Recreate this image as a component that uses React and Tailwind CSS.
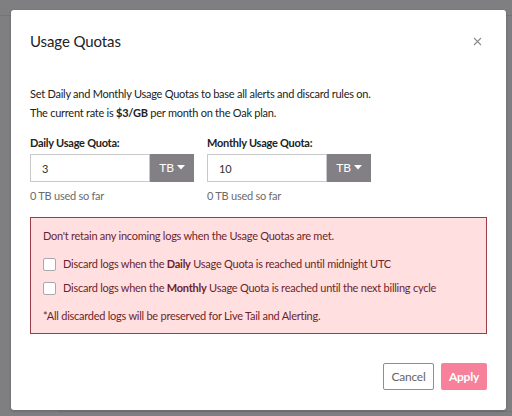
import React, { useState } from 'react';

function UnitButton() {
  return (
    <button className="flex w-[44px] items-center justify-center gap-[3px] bg-[#828085] text-[12px] text-white">
      TB
      <svg width="8" height="5" viewBox="0 0 8 5" className="mt-[-1px]">
        <path d="M0 0h8L4 4.5z" fill="#fff" />
      </svg>
    </button>
  );
}

function QuotaField({ label, value }) {
  const [v, setV] = useState(value);
  return (
    <div className="w-[164px]">
      <div className="mb-[3px] font-bold leading-[16px] text-[#222]">{label}</div>
      <div className="flex h-[28px]">
        <input
          value={v}
          onChange={(e) => setV(e.target.value)}
          className="h-full w-[120px] border border-[#c9c9cc] px-[11px] text-[11px] text-[#333] outline-none"
        />
        <UnitButton />
      </div>
      <div className="mt-[6px] leading-[16px] text-[#6b6b6b]">0 TB used so far</div>
    </div>
  );
}

function Check({ children }) {
  const [on, setOn] = useState(false);
  return (
    <label className="flex items-center gap-[7px] leading-[16px]">
      <input
        type="checkbox"
        checked={on}
        onChange={() => setOn(!on)}
        className="h-[13px] w-[13px] shrink-0 appearance-none rounded-[2px] border border-[#a9a9ad] bg-white"
      />
      <span className="whitespace-nowrap">{children}</span>
    </label>
  );
}

export default function App() {
  return (
    <div
      className="relative h-[416px] w-[512px] overflow-hidden bg-[#7f7e80] pl-[11px] pt-[10px] text-[11px] tracking-[-0.25px]"
      style={{ fontFamily: 'Lato, "Noto Sans", sans-serif' }}
    >
      {/* page behind the overlay */}
      <div className="absolute left-0 right-0 top-[15px] h-px bg-[#75747a]" />
      <div className="absolute bottom-0 left-[58px] right-0 top-[411px] border-t border-[#75747a]" />

      <div className="relative h-[400px] w-[495px] rounded-[3px] bg-white px-[19px] shadow-[0_1px_3px_rgba(0,0,0,0.2)]">
        {/* Header */}
        <div className="flex h-[64px] items-center justify-between pb-[2px]">
          <h2 className="text-[15px] leading-[20px] tracking-[-0.1px] text-[#222]">Usage Quotas</h2>
          <button className="mr-[5px] text-[#8a8a8a]">
            <svg width="9" height="9" viewBox="0 0 9 9">
              <path d="M1 1l7 7M8 1L1 8" stroke="currentColor" strokeWidth="1.1" />
            </svg>
          </button>
        </div>

        {/* Body */}
        <div className="pt-[10px] leading-[19px] text-[#222]">
          <p>Set Daily and Monthly Usage Quotas to base all alerts and discard rules on.</p>
          <p>
            The current rate is <b>$3/GB</b> per month on the Oak plan.
          </p>
        </div>

        <div className="mt-[13px] flex gap-[13px]">
          <QuotaField label="Daily Usage Quota:" value="3" />
          <QuotaField label="Monthly Usage Quota:" value="10" />
        </div>

        <div className="mt-[13px] h-[117px] border border-[#9b3d49] bg-[#ffdfe0] px-[12px] pt-[10px] leading-[16px] text-[#6e1f2b]">
          <p>Don't retain any incoming logs when the Usage Quotas are met.</p>
          <div className="mt-[12px] flex flex-col gap-[8px]">
            <Check>
              Discard logs when the <b>Daily</b> Usage Quota is reached until midnight UTC
            </Check>
            <Check>
              Discard logs when the <b>Monthly</b> Usage Quota is reached until the next billing cycle
            </Check>
          </div>
          <p className="mt-[12px]">*All discarded logs will be preserved for Live Tail and Alerting.</p>
        </div>

        {/* Footer */}
        <div className="mt-[29px] flex justify-end gap-[7px]">
          <button className="h-[27px] w-[51px] rounded-[2px] border border-[#8e8e8e] text-[12px] text-[#666]">
            Cancel
          </button>
          <button className="h-[27px] w-[46px] rounded-[2px] bg-[#f7819a] text-[12px] font-bold text-white">
            Apply
          </button>
        </div>
      </div>
    </div>
  );
}
